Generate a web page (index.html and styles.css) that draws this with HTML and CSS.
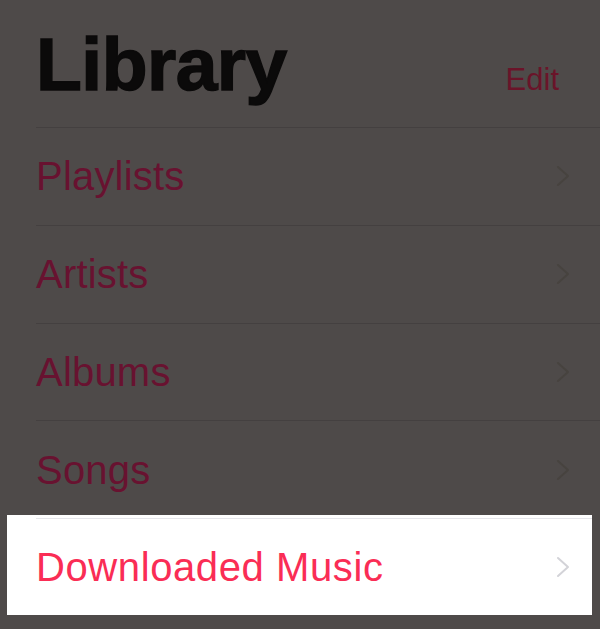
FILE: index.html
```html
<!DOCTYPE html>
<html lang="en">
<head>
    <meta charset="UTF-8">
    <meta name="viewport" content="width=device-width, initial-scale=1.0">
    <title>Library</title>
    <link rel="stylesheet" href="styles.css">
</head>
<body>

<div class="screen">
    <div class="header">
        <h1 class="title">Library</h1>
        <a class="edit" href="#">Edit</a>
    </div>

    <ul class="list">
        <li class="row">
            <span class="label">Playlists</span>
            <svg class="chevron" viewBox="0 0 14 22" width="14" height="22"><polyline points="2,2 12,11 2,20"/></svg>
        </li>
        <li class="row">
            <span class="label">Artists</span>
            <svg class="chevron" viewBox="0 0 14 22" width="14" height="22"><polyline points="2,2 12,11 2,20"/></svg>
        </li>
        <li class="row">
            <span class="label">Albums</span>
            <svg class="chevron" viewBox="0 0 14 22" width="14" height="22"><polyline points="2,2 12,11 2,20"/></svg>
        </li>
        <li class="row">
            <span class="label">Songs</span>
            <svg class="chevron" viewBox="0 0 14 22" width="14" height="22"><polyline points="2,2 12,11 2,20"/></svg>
        </li>
    </ul>

    <!-- linha destacada acima do overlay -->
    <div class="spotlight">
        <div class="row row-active">
            <span class="label">Downloaded Music</span>
            <svg class="chevron" viewBox="0 0 14 22" width="14" height="22"><polyline points="2,2 12,11 2,20"/></svg>
        </div>
    </div>
</div>

</body>
</html>
```

FILE: styles.css
```css
body {
    margin: 0;
    padding: 0;
    background-color: #4e4a49;
    font-family: "Liberation Sans", Arial, sans-serif;
}
.screen {
    width: 600px;
    height: 629px;
    overflow: hidden;
}
.header {
    display: flex;
    justify-content: space-between;
    align-items: baseline;
    box-sizing: border-box;
    height: 127px;
    padding: 27px 41px 0 36px;
}
.title {
    margin: 0;
    font-size: 75px;
    line-height: 1;
    font-weight: bold;
    letter-spacing: -0.5px;
    color: #0b0a0a;
    -webkit-text-stroke: 1.5px #0b0a0a;
}
.edit {
    font-size: 31px;
    color: #6a1429;
    text-decoration: none;
}
.list {
    list-style: none;
    margin: 0;
    padding: 0;
}
.row {
    display: flex;
    align-items: center;
    justify-content: space-between;
    box-sizing: border-box;
    height: 97.75px;
    margin-left: 36px;
    padding-right: 30px;
    border-top: 1px solid #444040;
}
.label {
    font-size: 40px;
    line-height: 1;
    letter-spacing: 0.2px;
    color: #681230;
}
.chevron {
    fill: none;
    stroke: #47433f;
    stroke-width: 2;
    stroke-linecap: round;
    stroke-linejoin: round;
}
.spotlight {
    background-color: #ffffff;
    margin: -3px 8px 0 7px;
    padding-top: 3px;
}
.row-active {
    margin-left: 29px;
    padding-right: 22px;
    border-top: 1px solid #e6e6ea;
    height: 97px;
}
.row-active .label {
    letter-spacing: 0.6px;
    color: #fa2d55;
}
.row-active .chevron {
    stroke: #d3d3d8;
}
```
